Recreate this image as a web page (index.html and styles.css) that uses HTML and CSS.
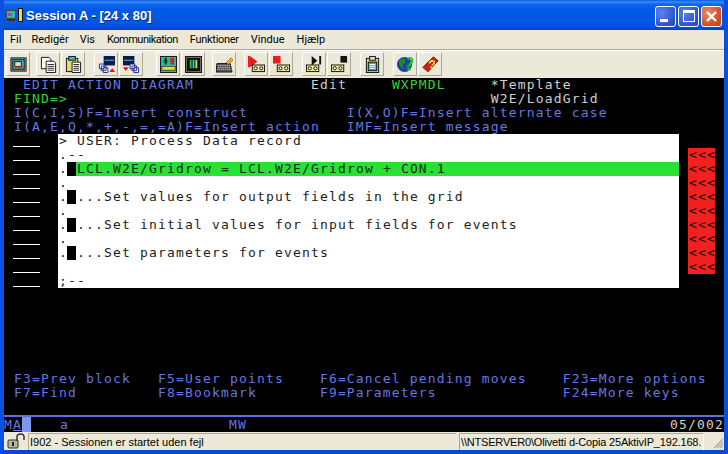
FILE: index.html
```html
<!DOCTYPE html>
<html lang="da">
<head>
<meta charset="utf-8">
<title>Session A - [24 x 80]</title>
<link rel="stylesheet" href="styles.css">
</head>
<body>
<div class="window">
  <header class="titlebar">
    <svg class="app-icon" viewBox="0 0 18 16" width="18" height="16">
      <rect x="0" y="3" width="10" height="9" fill="#444"/><rect x="1" y="4" width="8" height="7" fill="#2fb8b0"/><rect x="2" y="6" width="4" height="3" fill="#d02bd0"/>
      <rect x="1" y="12" width="8" height="2" fill="#333"/><path d="M9 5l3-3v3z" fill="#e01010"/>
      <rect x="12" y="1" width="5" height="14" fill="#111"/><rect x="13" y="2" width="3" height="12" fill="#f4e21c"/>
    </svg>
    <span class="title-text">Session A - [24 x 80]</span>
    <div class="caption-buttons">
      <div class="cap cap-blue"><span class="cap-min"></span></div>
      <div class="cap cap-blue"><span class="cap-max"></span></div>
      <div class="cap cap-red">
        <svg viewBox="0 0 13 13" width="13" height="13"><path d="M2 2l9 9M11 2l-9 9" stroke="#fff" stroke-width="2.4" fill="none"/></svg>
      </div>
    </div>
  </header>

  <nav class="menubar">
    <span class="menu m-fil">Fil</span>
    <span class="menu m-red">Redigér</span>
    <span class="menu m-vis">Vis</span>
    <span class="menu m-kom">Kommunikation</span>
    <span class="menu m-fun">Funktioner</span>
    <span class="menu m-vin">Vindue</span>
    <span class="menu m-hja">Hjælp</span>
  </nav>

  <div class="toolbar">
    <div class="tb-group gap-6">
      <div class="tb"><svg class="ico" viewBox="0 0 18 18"><rect x="1" y="2" width="16" height="14" fill="#999" stroke="#111"/><rect x="3" y="4" width="12" height="10" fill="#27c6d8" stroke="#111"/><rect x="5" y="6" width="7" height="5" fill="#f4d9c8" stroke="#111"/><rect x="5" y="11" width="9" height="2" fill="#e03030"/></svg></div>
    </div>
    <div class="tb-group gap-9">
      <div class="tb"><svg class="ico" viewBox="0 0 18 18"><path d="M1.500 1.500h8l2 2v10h-10z" fill="#fff" stroke="#111"/><path d="M6.500 5.500h8l2 2v10h-10z" fill="#fff" stroke="#111"/><path d="M8 9h7M8 11h7M8 13h7M8 15h7" stroke="#222"/></svg></div>
      <div class="tb"><svg class="ico" viewBox="0 0 18 18"><rect x="1.500" y="2.500" width="12" height="14" fill="#e8d878" stroke="#111"/><rect x="4" y="0.500" width="7" height="4" fill="#37c0c8" stroke="#111"/><path d="M7.500 6.500h9v11h-9z" fill="#fff" stroke="#111"/><path d="M9 9h6M9 11h6M9 13h6M9 15h6" stroke="#222"/></svg></div>
    </div>
    <div class="tb-group gap-13">
      <div class="tb"><svg class="ico" viewBox="0 0 18 18"><rect x="6" y="0" width="12" height="10" fill="#101848"/><rect x="7" y="4" width="10" height="1" fill="#30d0e0"/><path d="M1.500 8.500h5v5h-5zM3.500 10.500h5v5h-5zM5.500 12.500h5v5h-5z" fill="#fff" stroke="#1c2c90"/><path d="M12 17l3-4 3 4z" fill="#e01010"/></svg></div>
      <div class="tb"><svg class="ico" viewBox="0 0 18 18"><rect x="0" y="0" width="12" height="10" fill="#101848"/><rect x="1" y="4" width="10" height="1" fill="#30d0e0"/><path d="M7.500 8.500h5v5h-5zM9.500 10.500h5v5h-5zM11.500 12.500h5v5h-5z" fill="#fff" stroke="#1c2c90"/><path d="M0 12l3 4 3-4z" fill="#e01010"/></svg></div>
    </div>
    <div class="tb-group gap-7">
      <div class="tb"><svg class="ico" viewBox="0 0 18 18"><rect x="0.500" y="0.500" width="17" height="17" fill="#20b8c8" stroke="#111"/><rect x="3" y="4" width="6" height="3" fill="#20a020"/><rect x="5" y="2" width="2" height="7" fill="#111"/><rect x="11" y="2" width="4" height="7" fill="#d02020"/><rect x="2" y="11" width="14" height="4" fill="#f0d820" stroke="#111" stroke-width=".6"/></svg></div>
      <div class="tb"><svg class="ico" viewBox="0 0 18 18"><rect x="0.500" y="0.500" width="17" height="17" fill="#777" stroke="#111"/><rect x="2" y="2" width="14" height="14" fill="#081008"/><rect x="5" y="4" width="2" height="9" fill="#20c020"/><rect x="8" y="4" width="2" height="9" fill="#20d0d0"/><rect x="11" y="4" width="2" height="9" fill="#e0d020"/></svg></div>
    </div>
    <div class="tb-group gap-8">
      <div class="tb"><svg class="ico" viewBox="0 0 18 18"><path d="M1 8h14l2 9H0z" fill="#555" stroke="#111"/><path d="M2 10h13M2 12h14M1.500 14h15" stroke="#ddd" stroke-dasharray="1 1"/><path d="M11 7l5-5 2 2-5 5z" fill="#e8c020" stroke="#a02020" stroke-width=".7"/></svg></div>
    </div>
    <div class="tb-group gap-9">
      <div class="tb"><svg class="ico" viewBox="0 0 18 18"><path d="M2 0l8 6-8 6z" fill="#e81c1c"/><rect x="0" y="0" width="2" height="12" fill="#e81c1c"/><rect x="4.500" y="9.500" width="13" height="7" fill="#f4e890" stroke="#111"/><circle cx="8" cy="13" r="1.700" fill="#fff" stroke="#111"/><circle cx="14" cy="13" r="1.700" fill="#fff" stroke="#111"/></svg></div>
      <div class="tb"><svg class="ico" viewBox="0 0 18 18"><rect x="0" y="0" width="8" height="8" fill="#e81c1c"/><rect x="4.500" y="9.500" width="13" height="7" fill="#f4e890" stroke="#111"/><circle cx="8" cy="13" r="1.700" fill="#fff" stroke="#111"/><circle cx="14" cy="13" r="1.700" fill="#fff" stroke="#111"/></svg></div>
    </div>
    <div class="tb-group gap-9">
      <div class="tb"><svg class="ico" viewBox="0 0 18 18"><path d="M6 0l6 5-6 5z" fill="#111"/><rect x="14" y="0" width="2" height="9" fill="#111"/><rect x="0.500" y="9.500" width="13" height="7" fill="#f4e890" stroke="#111"/><circle cx="4" cy="13" r="1.700" fill="#fff" stroke="#111"/><circle cx="10" cy="13" r="1.700" fill="#fff" stroke="#111"/></svg></div>
      <div class="tb"><svg class="ico" viewBox="0 0 18 18"><rect x="10" y="0" width="7" height="7" fill="#111"/><rect x="0.500" y="9.500" width="13" height="7" fill="#f4e890" stroke="#111"/><circle cx="4" cy="13" r="1.700" fill="#fff" stroke="#111"/><circle cx="10" cy="13" r="1.700" fill="#fff" stroke="#111"/></svg></div>
    </div>
    <div class="tb-group gap-9">
      <div class="tb"><svg class="ico" viewBox="0 0 18 18"><rect x="2.500" y="2.500" width="13" height="15" fill="#e8d040" stroke="#111"/><rect x="6" y="0.500" width="6" height="4" fill="#ddd" stroke="#111"/><rect x="4.500" y="6.500" width="9" height="9" fill="#28b8c0" stroke="#111"/><path d="M6 9h6M6 11h6M6 13h6" stroke="#fff"/></svg></div>
    </div>
    <div class="tb-group">
      <div class="tb"><svg class="ico" viewBox="0 0 18 18"><circle cx="8" cy="9" r="8" fill="#1c3fa8"/><path d="M3 4l5-2 1 5-3 2 1 5-3-2-2-4zM10 9l4 1-1 4-3 1z" fill="#1c8a30"/><path d="M11 3c3-2 6 0 5 3-1 2-3 2-3 5" stroke="#10d020" stroke-width="2.200" fill="none"/><rect x="12" y="13" width="2.400" height="2.400" fill="#10d020"/></svg></div>
      <div class="tb"><svg class="ico" viewBox="0 0 18 18"><path d="M1 12L12 1l5 4L6 17z" fill="#d81c1c" stroke="#5a0c0c"/><path d="M2 14l4 3-1 1-4-3z" fill="#f0e8c8"/><path d="M8 8c0-3 5-4 5-1 0 2-2 2-2 3" stroke="#f4e020" stroke-width="1.800" fill="none"/><rect x="9" y="11" width="2" height="2" fill="#f4e020"/></svg></div>
    </div>
  </div>

  <main class="terminal">
    <div class="row blue">  EDIT ACTION DIAGRAM             <span class="white">Edit</span>     <span class="green">WXPMDL</span>     <span class="white">*Template</span></div>
    <div class="row green"> FIND=&gt;                                               <span class="white">W2E/LoadGrid</span></div>
    <div class="row blue"> I(C,I,S)F=Insert construct           I(X,O)F=Insert alternate case</div>
    <div class="row blue"> I(A,E,Q,*,+,-,=,=A)F=Insert action   IMF=Insert message</div>

    <div class="middle">
      <div class="gutter">
        <i></i><i></i><i></i><i></i><i></i><i></i><i></i><i></i><i></i><i></i><i></i>
      </div>
      <section class="popup">
        <div class="row">&gt; USER: Process Data record</div>
        <div class="row">.--</div>
        <div class="row"><span class="dot">.</span><span class="block"></span><span class="selected">LCL.W2E/Gridrow = LCL.W2E/Gridrow + CON.1</span></div>
        <div class="row">.</div>
        <div class="row"><span class="dot">.</span><span class="block"></span><span class="task">...Set values for output fields in the grid</span></div>
        <div class="row">.</div>
        <div class="row"><span class="dot">.</span><span class="block"></span><span class="task">...Set initial values for input fields for events</span></div>
        <div class="row">.</div>
        <div class="row"><span class="dot">.</span><span class="block"></span><span class="task">...Set parameters for events</span></div>
        <div class="row">&#160;</div>
        <div class="row">;--</div>
      </section>
      <div class="marker">
        <div class="row">&lt;&lt;&lt;</div><div class="row">&lt;&lt;&lt;</div><div class="row">&lt;&lt;&lt;</div>
        <div class="row">&lt;&lt;&lt;</div><div class="row">&lt;&lt;&lt;</div><div class="row">&lt;&lt;&lt;</div>
        <div class="row">&lt;&lt;&lt;</div><div class="row">&lt;&lt;&lt;</div><div class="row">&lt;&lt;&lt;</div>
      </div>
    </div>

    <div class="keys">
      <div class="row blue"> F3=Prev block   F5=User points    F6=Cancel pending moves    F23=More options</div>
      <div class="row blue"> F7=Find         F8=Bookmark       F9=Parameters              F24=More keys</div>
    </div>

    <div class="oia">
      <span class="oia-left"><span class="ma">M<u>A</u></span><span class="cursor"></span></span>
      <span class="oia-a">a</span>
      <span class="oia-mw">MW</span>
      <span class="oia-pos">05/002</span>
    </div>
  </main>

  <footer class="statusbar">
    <svg class="lock" viewBox="0 0 20 16" width="20" height="16">
      <rect x="1" y="7" width="10" height="8" rx="1" fill="#b8b4a0" stroke="#333"/>
      <rect x="5" y="9" width="2" height="4" fill="#222"/>
      <path d="M10 8V4c0-4 7-4 7 0v3" fill="none" stroke="#333" stroke-width="1.500"/>
    </svg>
    <div class="field field-main">I902 - Sessionen er startet uden fejl</div>
    <div class="field field-path">\\NTSERVER0\Olivetti d-Copia 25AktivIP_192.168.</div>
    <svg class="grip" viewBox="0 0 12 12" width="12" height="12"><path d="M11 2L2 11M11 5l-6 6M11 8l-3 3" stroke="#aca899" stroke-width="1.200"/></svg>
  </footer>
</div>
</body>
</html>
```
FILE: styles.css
```css
* { box-sizing: border-box; }
html, body { margin: 0; padding: 0; background: #000; }
.window {
  width: 728px; height: 454px; overflow: hidden;
  display: flex; flex-direction: column;
  background: #0a55e6;
  border-left: 4px solid #0a52e4;
  border-right: 4px solid #0a4fdc;
  border-bottom: 4px solid #0a48d0;
  font-family: "Liberation Sans", sans-serif;
}
.titlebar {
  height: 30px; margin: 0 -4px; padding: 0 6px;
  display: flex; align-items: center; flex: none;
  background: linear-gradient(#0a58e0 0, #3a8cf8 2px, #1068ee 4px, #0058e4 10px, #0058e6 22px, #0050dc 27px, #0040c4 30px);
}
.app-icon { flex: none; margin-right: 2px; }
.title-text { color: #fff; font-weight: 700; font-size: 13px; text-shadow: 1px 1px 0 #0a2c90; white-space: pre; }
.caption-buttons { margin-left: auto; display: flex; gap: 2px; padding-top: 2px; }
.cap { width: 21px; height: 21px; border: 1px solid #fff; border-radius: 3px; display: flex; align-items: center; justify-content: center; }
.cap-blue { background: radial-gradient(circle at 30% 30%, #5c82ee, #2a52c8 75%, #2448c0); }
.cap-red { background: radial-gradient(circle at 30% 30%, #ee8a64, #d8532c 60%, #c43c1c); }
.cap-min { width: 8px; height: 3px; background: #fff; margin: 8px 4px 0 0; }
.cap-max { width: 12px; height: 12px; border: 1px solid #fff; border-top-width: 3px; }

.menubar {
  height: 20px; flex: none; display: flex; align-items: center;
  background: #ece9d8; color: #000; font-family: Roboto, sans-serif; font-size: 11px;
  border-bottom: 1px solid #aca899;
}
.menu { flex: none; }
.m-fil { margin-left: 6px; }
.m-red { margin-left: 10px; }
.m-vis { margin-left: 11px; }
.m-kom { margin-left: 12px; letter-spacing: -0.5px; }
.m-fun { margin-left: 12px; letter-spacing: -0.3px; }
.m-vin { margin-left: 12px; }
.m-hja { margin-left: 12px; }

.toolbar {
  height: 28px; flex: none; display: flex; align-items: flex-start;
  background: #ece9d8; border-top: 1px solid #fff; padding-top: 1px; padding-left: 2px;
}
.tb-group { display: flex; gap: 1px; }
.gap-6 { margin-right: 6px; }
.gap-7 { margin-right: 7px; }
.gap-8 { margin-right: 8px; }
.gap-9 { margin-right: 9px; }
.gap-13 { margin-right: 13px; }
.tb {
  width: 24px; height: 24px; display: flex; align-items: center; justify-content: center;
  background: #ece9d8;
  border-top: 1px solid #fff; border-left: 1px solid #fff;
  border-right: 1px solid #aca899; border-bottom: 1px solid #aca899;
}
.ico { width: 17px; height: 17px; display: block; }

.terminal {
  flex: 1; min-height: 0; background: #000; color: #6c82ea;
  font-family: "DejaVu Sans Mono", monospace; font-size: 13px; letter-spacing: 1.17px;
  display: flex; flex-direction: column;
}
.row { height: 14px; line-height: 14px; white-space: pre; padding-left: 1px; }
.blue { color: #6478e0; }
.green { color: #36d236; }
.white { color: #d0d0d0; }
.middle { display: flex; align-items: flex-start; padding-left: 9px; height: 154px; flex: none; }
.gutter { width: 27px; margin-right: 18px; flex: none; display: flex; flex-direction: column; }
.gutter i { display: block; height: 14px; border-bottom: 1px solid #fff; position: relative; top: -1px; }
.popup { width: 621px; height: 154px; flex: none; background: #fff; color: #222; }
.dot { display: inline-block; width: 8px; height: 14px; vertical-align: top; }
.block { display: inline-block; width: 9px; height: 14px; background: #000; vertical-align: top; }
.task { padding-left: 1px; }
.selected { display: inline-block; width: 603px; height: 14px; padding-left: 1px; background: #2adf35; vertical-align: top; color: #0c3010; }
.marker { width: 27px; margin: 14px 0 0 9px; flex: none; background: #f2201e; color: #111; }
.keys { margin-top: 84px; flex: none; }
.oia {
  margin-top: 15px; border-top: 2px solid #5a70e0; height: 17px; flex: none;
  display: flex; align-items: flex-start; white-space: pre; color: #6478e0; line-height: 15px;
}
.oia-left { display: flex; width: 56px; flex: none; }
.ma { width: 18px; }
.cursor { width: 9px; height: 15px; background: #7d97ee; }
.oia-a { width: 169px; flex: none; }
.oia-mw { flex: none; }
.oia-pos { margin-left: auto; color: #d0d0d0; }

.statusbar {
  height: 18px; flex: none; display: flex; align-items: center;
  background: #ece9d8; font-size: 11px; color: #000; margin-top: -1px;
}
.lock { flex: none; margin: 0 1px 0 3px; }
.field { height: 17px; line-height: 16px; padding-left: 1px; border-top: 1px solid #aca899; border-left: 1px solid #aca899; white-space: nowrap; overflow: hidden; }
.field-main { width: 428px; flex: none; }
.field-path { width: 245px; flex: none; margin-left: 3px; border-right: 1px solid #fff; letter-spacing: -0.18px; }
.grip { flex: none; margin: 4px 0 0 auto; }
```
